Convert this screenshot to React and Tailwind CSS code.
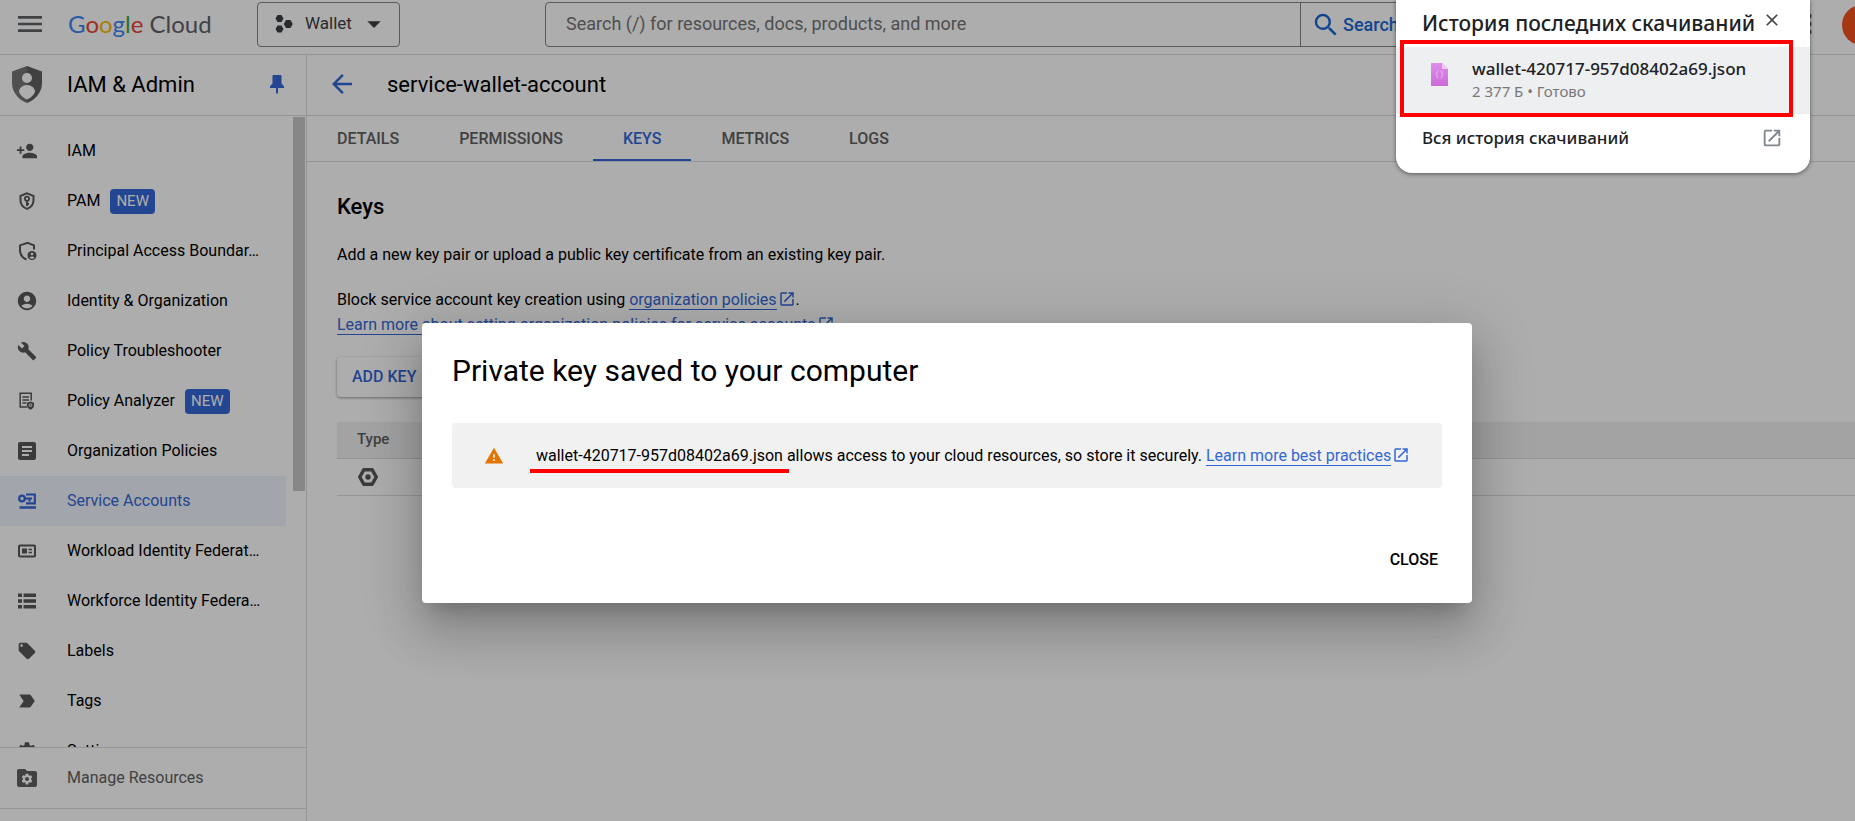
import {
  MdPersonAddAlt1, MdAccountCircle, MdBuild, MdArticle, MdLabelImportant,
  MdLocalOffer, MdSettings, MdMenu, MdArrowBack, MdSearch,
  MdArrowDropDown, MdMoreVert, MdClose, MdOpenInNew, MdWarning,
} from 'react-icons/md';

const ShieldKeyIcon = () => (
  <svg viewBox="0 0 20 20" className="size-5" fill="none" stroke="currentColor" strokeWidth="2">
    <path d="M10 2.300 3.500 4.900v4.400c0 4 2.700 7.200 6.500 8.600 3.800-1.400 6.500-4.600 6.500-8.600V4.900z" />
    <circle cx="10" cy="7.800" r="2.100" strokeWidth="1.800" />
    <path d="M10 9.800v5.200M10 13h2" strokeWidth="2" />
  </svg>
);

const ShieldPersonIcon = () => (
  <svg viewBox="0 0 20 20" className="size-5" fill="none" stroke="currentColor" strokeWidth="2">
    <path d="M17 8.500V4.400l-6.500-2.600L3 4.400v4.900c0 4.200 2.700 7.600 6.500 9.200" />
    <circle cx="15" cy="14.500" r="4.500" fill="currentColor" stroke="none" />
    <circle cx="15" cy="13" r="1.300" fill="#fff" stroke="none" />
    <path d="M12.600 16.700c.8-1.700 4-1.700 4.800 0-.8 1.300-4 1.300-4.800 0z" fill="#fff" stroke="none" />
  </svg>
);

const AnalyzerIcon = () => (
  <svg viewBox="0 0 20 20" className="size-5" fill="none" stroke="currentColor" strokeWidth="1.500">
    <path d="M10 16H3.200V2.200h11V9.500" />
    <path d="M5.500 6h6.500M5.500 9h6.500M5.500 12h4" />
    <path d="m13.500 10.500 3.500 1.300v2.700c0 2-1.500 3.500-3.500 4.300-2-.8-3.500-2.300-3.500-4.300v-2.700z" fill="currentColor" stroke="none" />
    <circle cx="13.500" cy="14.200" r="1.300" stroke="#fff" strokeWidth="1" />
  </svg>
);

const ServiceAccountIcon = () => (
  <svg viewBox="0 0 20 20" className="size-5" fill="none" stroke="currentColor" strokeWidth="2.200">
    <circle cx="5" cy="7.500" r="2.800" />
    <path d="M8 7.500h7M12.500 7.500v3" />
    <path d="M9 3.500h8.800v8.800H9" />
    <path d="M2.500 16.500H19" strokeWidth="2.500" />
  </svg>
);

const WorkloadIcon = () => (
  <svg viewBox="0 0 20 20" className="size-5" fill="none" stroke="currentColor" strokeWidth="2">
    <rect x="2" y="4.500" width="16" height="11" rx="1" />
    <path d="M5 7.500h5v5H5z" fill="currentColor" stroke="none" />
    <path d="M11.500 8.500H15M11.500 11.500H15" strokeWidth="1.500" />
  </svg>
);

const ListIcon = () => (
  <svg viewBox="0 0 20 20" className="size-5" fill="currentColor">
    <path d="M1 2.500h4v3.500H1zM6.500 2.500H19v3.500H6.500zM1 8.200h4v3.600H1zM6.500 8.200H19v3.600H6.500zM1 14h4v3.500H1zM6.500 14H19v3.500H6.500z" />
  </svg>
);

const PinIcon = () => (
  <svg viewBox="0 0 14 19" className="h-[19px] w-[14px]" fill="currentColor">
    <path d="M3.500 0h7c.6 0 1 .4 1 1v7.500l2.500 2.700V13H8v5l-1 1-1-1v-5H0v-1.800l2.500-2.700V1c0-.6.4-1 1-1z" />
  </svg>
);

const FolderGearIcon = () => (
  <svg viewBox="0 0 24 24" className="size-6" fill="currentColor">
    <path d="M4 3c-1.100 0-2 .9-2 2v14c0 1.100.9 2 2 2h16c1.100 0 2-.9 2-2V7c0-1.100-.9-2-2-2h-8l-2-2z" />
    <g transform="translate(5.300 6.300) scale(.56)" fill="#fff">
      <path d="M19.140 12.940c.04-.3.060-.61.060-.94 0-.32-.02-.64-.07-.94l2.030-1.580c.18-.14.23-.41.12-.61l-1.920-3.320c-.12-.22-.37-.29-.59-.22l-2.390.96c-.5-.38-1.030-.7-1.620-.94l-.36-2.540c-.04-.24-.24-.41-.48-.41h-3.840c-.24 0-.43.17-.47.41l-.36 2.540c-.59.24-1.130.57-1.620.94l-2.390-.96c-.22-.08-.47 0-.59.22L2.740 8.870c-.12.21-.08.47.12.61l2.030 1.580c-.05.3-.09.63-.09.94s.02.64.07.94l-2.030 1.580c-.18.14-.23.41-.12.61l1.920 3.320c.12.22.37.29.59.22l2.390-.96c.5.38 1.030.7 1.620.94l.36 2.540c.05.24.24.41.48.41h3.840c.24 0 .44-.17.47-.41l.36-2.540c.59-.24 1.130-.56 1.620-.94l2.390.96c.22.08.47 0 .59-.22l1.920-3.320c.12-.22.07-.47-.12-.61zM12 15.600A3.600 3.600 0 1 1 12 8.400a3.600 3.600 0 0 1 0 7.200z" />
    </g>
  </svg>
);

const IamShield = () => (
  <svg viewBox="0 0 30 37" className="h-[37px] w-[30px] shrink-0">
    <path d="M15 0 0 5.500V17c0 9 6 16.500 15 20z" fill="#757575" />
    <path d="m15 0 15 5.500V17c0 9-6 16.500-15 20z" fill="#616161" />
    <circle cx="15" cy="12" r="5" fill="#fff" />
    <path d="M7 26c0-4 3.500-7 8-7s8 3 8 7c-1.500 3.500-4.500 6-8 7.500C11.500 32 8.500 29.500 7 26z" fill="#fff" />
  </svg>
);

const ProjectIcon = () => (
  <svg viewBox="0 0 18 20" className="h-5 w-[18px]" fill="#3c4043">
    <path d="M2.500 1h4l2 3.500-2 3.500h-4l-2-3.500zM2.500 11.500h4l2 3.500-2 3.500h-4l-2-3.500zM11 6h4.500l2.200 4-2.200 4H11L8.800 10z" />
  </svg>
);

const KeyTypeIcon = () => (
  <svg viewBox="0 0 20 18" className="h-[18px] w-5">
    <path d="M5.800 1.800h8.400L18.300 9l-4.100 7.200H5.800L1.700 9z" fill="none" stroke="#585858" strokeWidth="3.400" strokeLinejoin="round" />
    <circle cx="10" cy="9" r="2.700" fill="#585858" />
  </svg>
);

const JsonFileIcon = () => (
  <svg viewBox="0 0 17 23" className="h-[23px] w-[17px]">
    <defs>
      <linearGradient id="file" x1="0" y1="0" x2="0" y2="1">
        <stop offset="0" stopColor="#dd8ee8" />
        <stop offset="1" stopColor="#cb6bd9" />
      </linearGradient>
    </defs>
    <path d="M0 0h11l6 6v17H0z" fill="url(#file)" />
    <path d="M11 0v6h6z" fill="#f0c8f5" />
    <path d="M7.500 8c-1.500 0-1.500 1-1.500 2s0 1.500-1 1.500c1 0 1 .5 1 1.500s0 2 1.500 2M9.500 8c1.500 0 1.500 1 1.500 2s0 1.500 1 1.500c-1 0-1 .5-1 1.500s0 2-1.500 2" fill="none" stroke="#eebcf4" />
  </svg>
);

const NAV = [
  { label: 'IAM', icon: () => <MdPersonAddAlt1 className="size-[22px] -scale-x-100" /> },
  { label: 'PAM', icon: ShieldKeyIcon, isNew: true },
  { label: 'Principal Access Boundar…', icon: ShieldPersonIcon },
  { label: 'Identity & Organization', icon: () => <MdAccountCircle className="size-[22px]" /> },
  { label: 'Policy Troubleshooter', icon: () => <MdBuild className="size-5" /> },
  { label: 'Policy Analyzer', icon: AnalyzerIcon, isNew: true },
  { label: 'Organization Policies', icon: () => <MdArticle className="size-6" /> },
  { label: 'Service Accounts', icon: ServiceAccountIcon, active: true },
  { label: 'Workload Identity Federat…', icon: WorkloadIcon },
  { label: 'Workforce Identity Federa…', icon: ListIcon },
  { label: 'Labels', icon: () => <MdLocalOffer className="size-5" /> },
  { label: 'Tags', icon: () => <MdLabelImportant className="size-[22px]" /> },
  { label: 'Settings', icon: () => <MdSettings className="size-[22px]" /> },
];

const TABS = ['DETAILS', 'PERMISSIONS', 'KEYS', 'METRICS', 'LOGS'];

const ExternalLink = ({ children }) => (
  <a href="#" className="text-[#3367d6]">
    <span className="border-b border-[#3367d6]">{children}</span>
    <MdOpenInNew className="ml-px inline size-[18px] align-[-3px]" />
  </a>
);

const Header = () => (
  <header className="flex h-[55px] shrink-0 items-start border-b border-[#dadce0] pt-0.5">
    <button aria-label="Main menu" className="ml-[14px] mt-1.5 text-[#5f6368]">
      <MdMenu className="size-8" />
    </button>
    <a href="#" className="ml-[22px] mt-1.5 w-[146px] whitespace-nowrap font-[Lato] text-[24px] leading-8">
      <span className="text-[#4285f4]">G</span>
      <span className="text-[#ea4335]">o</span>
      <span className="text-[#fbbc04]">o</span>
      <span className="text-[#4285f4]">g</span>
      <span className="text-[#34a853]">l</span>
      <span className="text-[#ea4335]">e</span>
      <span className="text-[#5f6368]"> Cloud</span>
    </a>
    <button className="ml-[43px] flex h-[45px] w-[143px] shrink-0 items-center rounded border border-[#80868b] pb-0.5 pl-[17px] text-[17px] text-[#3c4043]">
      <ProjectIcon />
      <span className="ml-3 grow text-left">Wallet</span>
      <MdArrowDropDown className="mr-[9px] size-8" />
    </button>
    <div className="ml-[145px] flex h-[45px] grow rounded border border-[#80868b]">
      <input
        aria-label="Search"
        placeholder="Search (/) for resources, docs, products, and more"
        className="min-w-0 grow px-5 pb-0.5 text-[18px] placeholder:text-[#757575]"
      />
      <button className="flex w-[140px] items-center gap-0.5 border-l border-[#80868b] pl-2.5 text-[18px] font-medium text-[#1a67d2]">
        <MdSearch className="size-[30px]" />
        Search
      </button>
    </div>
    <button aria-label="More options" className="ml-[352px] mt-1.5 w-8 text-[#5f6368]">
      <MdMoreVert className="size-8" />
    </button>
    <div className="-mr-[27px] ml-[17px] mt-[3px] size-10 shrink-0 rounded-full bg-[#f4511e]" />
  </header>
);

const Sidebar = () => (
  <aside className="flex w-[307px] shrink-0 flex-col border-r border-[#dadce0]">
    <div className="flex h-[61px] shrink-0 items-center border-b border-[#dadce0] pb-0.5 pl-3">
      <IamShield />
      <h2 className="ml-[25px] grow text-[22px]">IAM &amp; Admin</h2>
      <button aria-label="Unpin menu" className="mr-[22px] text-[#3367d6]">
        <PinIcon />
      </button>
    </div>
    <div className="flex min-h-0 grow">
      <nav className="w-[286px] overflow-hidden pt-2.5">
        {NAV.map(({ label, icon: Icon, isNew, active }) => (
          <a
            key={label}
            href="#"
            className={`flex h-[50px] items-center text-[16px] ${active ? 'bg-[#eff3fd] text-[#3367d6]' : ''}`}
          >
            <span className={`flex w-[67px] shrink-0 pl-[15px] ${active ? 'text-[#3367d6]' : 'text-[#585858]'}`}>
              <span className="flex w-6 justify-center">
                <Icon />
              </span>
            </span>
            <span className="whitespace-nowrap">{label}</span>
            {isNew && <span className="ml-2.5 rounded-sm bg-[#3367d6] px-1.5 text-[15px] leading-[25px] text-white">NEW</span>}
          </a>
        ))}
      </nav>
      <div className="ml-[7px] mt-px h-[374px] w-3 bg-[#c8c8c8]" />
    </div>
    <a href="#" className="flex h-[61px] shrink-0 items-center border-t border-[#dadce0] pl-[15px] text-[16px] text-[#616161]">
      <FolderGearIcon />
      <span className="ml-7">Manage Resources</span>
    </a>
    <div className="h-[13px] shrink-0 border-t border-[#dadce0]" />
  </aside>
);

const Content = () => (
  <main className="min-w-0 grow">
    <div className="flex h-[61px] items-center border-b border-[#dadce0] pb-0.5 pl-5">
      <button aria-label="Back" className="text-[#3367d6]">
        <MdArrowBack className="size-[30px]" />
      </button>
      <h1 className="ml-[30px] text-[22px]">service-wallet-account</h1>
    </div>
    <div className="flex h-[46px] border-b border-[#dadce0]">
      {TABS.map(tab => (
        <button
          key={tab}
          className={`border-b-2 px-[30px] pt-0.5 text-[16px] font-medium ${
            tab === 'KEYS' ? 'border-[#3367d6] text-[#3367d6]' : 'border-transparent text-[#616161]'
          }`}
        >
          {tab}
        </button>
      ))}
    </div>
    <div className="pl-[30px] pt-[31px] text-[16px] leading-[25px]">
      <h2 className="text-[22px] font-medium leading-7">Keys</h2>
      <p className="mt-[21px]">Add a new key pair or upload a public key certificate from an existing key pair.</p>
      <p className="mt-5">
        Block service account key creation using <ExternalLink>organization policies</ExternalLink>.
        <br />
        <ExternalLink>Learn more about setting organization policies for service accounts</ExternalLink>
      </p>
      <button className="mt-5 h-10 rounded px-[15px] pb-0.5 font-medium text-[#3367d6] shadow-[0_1px_3px_rgba(0,0,0,0.4)]">
        ADD KEY
      </button>
      <table className="mt-[25px] w-full text-left">
        <thead>
          <tr className="h-9 border-b border-[#dadce0] bg-[#f1f1f1] text-[15px] text-[#616161]">
            <th className="pl-5 font-medium">Type</th>
          </tr>
        </thead>
        <tbody>
          <tr className="h-[37px] border-b border-[#dadce0]">
            <td className="pl-[21px]">
              <KeyTypeIcon />
            </td>
          </tr>
        </tbody>
      </table>
    </div>
  </main>
);

const SavedDialog = () => (
  <div className="absolute inset-0 flex items-center justify-center bg-black/32 pl-[39px] pt-[105px]">
    <div role="dialog" aria-labelledby="dialog-title" className="w-[1050px] rounded bg-white px-[30px] pb-[30px] pt-7 shadow-[0_14px_19px_-9px_rgba(0,0,0,0.2),0_30px_48px_4px_rgba(0,0,0,0.14),0_11px_58px_10px_rgba(0,0,0,0.12)]">
      <h2 id="dialog-title" className="text-[30px] leading-10">Private key saved to your computer</h2>
      <div className="mt-8 flex h-[65px] items-center rounded bg-[#f1f1f1] pl-8 text-[16px]">
        <MdWarning className="size-5 shrink-0 text-[#e37400]" />
        <p className="ml-8 whitespace-nowrap">
          <span className="relative">
            wallet-420717-957d08402a69.json
            <span className="absolute -inset-x-1.5 -bottom-2 h-1 bg-[#ff0000]" />
          </span>{' '}
          allows access to your cloud resources, so store it securely. <ExternalLink>Learn more best practices</ExternalLink>
        </p>
      </div>
      <div className="mt-[50px] flex justify-end">
        <button className="h-[35px] px-1 pt-2 text-[16px] font-medium">CLOSE</button>
      </div>
    </div>
  </div>
);

const Downloads = () => (
  <div className="absolute right-[45px] top-0 h-[173px] w-[414px] rounded-b-2xl bg-white font-['Noto_Sans',sans-serif] font-medium text-[#202124] shadow-[0_1px_4px_rgba(0,0,0,0.5)]">
    <div className="flex h-[47px] items-center pl-[26px] pr-[28px]">
      <h2 className="grow whitespace-nowrap text-[21px]">История последних скачиваний</h2>
      <button aria-label="Закрыть" className="-mt-2 text-[#474747]">
        <MdClose className="size-5" />
      </button>
    </div>
    <div className="flex h-[67px] items-start bg-[#eeeff1] pl-[35px] pt-4">
      <JsonFileIcon />
      <div className="-mt-1.5 ml-6">
        <p className="text-[17px] leading-6">wallet-420717-957d08402a69.json</p>
        <p className="text-[15px] font-normal leading-5 text-[#777]">2 377 Б • Готово</p>
      </div>
    </div>
    <a href="#" className="flex h-12 items-center justify-between pl-[26px] pr-[27px] text-[17px]">
      Вся история скачиваний
      <MdOpenInNew className="size-[22px] text-[#80868b]" />
    </a>
    <div className="absolute left-1 top-10 h-[77px] w-[393px] border-4 border-[#ff0000]" />
  </div>
);

const App = () => (
  <div className="relative flex h-screen flex-col overflow-hidden bg-white font-[Roboto,sans-serif] text-black">
    <Header />
    <div className="flex min-h-0 grow">
      <Sidebar />
      <Content />
    </div>
    <SavedDialog />
    <Downloads />
  </div>
);

export default App;
